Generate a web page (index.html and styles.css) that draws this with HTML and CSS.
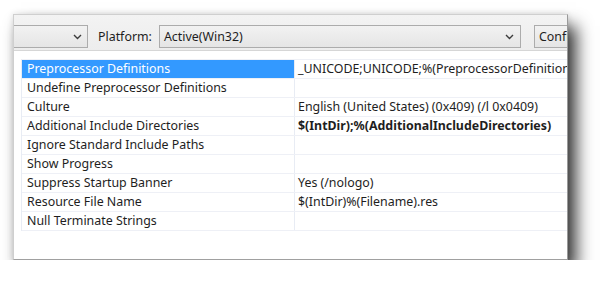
FILE: index.html
```html
<!DOCTYPE html>
<html lang="en">
<head>
    <meta charset="UTF-8">
    <title>C/C++ Preprocessor Properties</title>
    <link rel="stylesheet" href="styles.css">
</head>
<body>
    <div class="window">
        <div class="toolbar">
            <div class="combo combo-config">
                <span class="combo-text"></span>
                <svg class="chevron" width="9" height="6" viewBox="0 0 9 6"><path d="M1 1 L4.5 4.5 L8 1" fill="none" stroke="#3c3c3c" stroke-width="1.4"/></svg>
            </div>
            <label class="tb-label">Platform:</label>
            <div class="combo combo-platform">
                <span class="combo-text">Active(Win32)</span>
                <svg class="chevron" width="9" height="6" viewBox="0 0 9 6"><path d="M1 1 L4.5 4.5 L8 1" fill="none" stroke="#3c3c3c" stroke-width="1.4"/></svg>
            </div>
            <button class="tb-button">Configuration Manager...</button>
        </div>

        <div class="grid">
            <div class="gutter"></div>
            <div class="rows">
                <div class="row selected">
                    <div class="name">Preprocessor Definitions</div>
                    <div class="value">_UNICODE;UNICODE;%(PreprocessorDefinitions)</div>
                </div>
                <div class="row">
                    <div class="name">Undefine Preprocessor Definitions</div>
                    <div class="value"></div>
                </div>
                <div class="row">
                    <div class="name">Culture</div>
                    <div class="value">English (United States) (0x409) (/l 0x0409)</div>
                </div>
                <div class="row">
                    <div class="name">Additional Include Directories</div>
                    <div class="value bold">$(IntDir);%(AdditionalIncludeDirectories)</div>
                </div>
                <div class="row">
                    <div class="name">Ignore Standard Include Paths</div>
                    <div class="value"></div>
                </div>
                <div class="row">
                    <div class="name">Show Progress</div>
                    <div class="value"></div>
                </div>
                <div class="row">
                    <div class="name">Suppress Startup Banner</div>
                    <div class="value">Yes (/nologo)</div>
                </div>
                <div class="row">
                    <div class="name">Resource File Name</div>
                    <div class="value">$(IntDir)%(Filename).res</div>
                </div>
                <div class="row">
                    <div class="name">Null Terminate Strings</div>
                    <div class="value"></div>
                </div>
            </div>
        </div>
    </div>
</body>
</html>
```

FILE: styles.css
```css
body { margin: 0; background: #fff; font-family: "Noto Sans", "Open Sans", sans-serif; font-size: 12.4px; color: #1e1e1e; }

.window { margin: 14px 0 0 13px; width: 553px; height: 244px; border: 1px solid #cfcfcf; border-right-color: #9a9a9a; border-bottom-color: #a0a0a0; background: #fff; overflow: hidden; box-shadow: 8px 12px 16px rgba(0, 0, 0, 0.8), 0 0 6px rgba(0, 0, 0, 0.12); }

.toolbar { display: flex; align-items: flex-start; padding: 10px 0 2px; background: linear-gradient(#f3f3f3, #ededed); border-bottom: 1px solid #d6d6d6; }
.combo { flex: none; display: flex; align-items: center; justify-content: space-between; box-sizing: border-box; height: 23px; border: 1px solid #acacac; background: linear-gradient(#f2f2f2, #e5e5e5); }
.combo-config { width: 74px; border-left: none; padding-right: 5px; }
.combo-platform { width: 362px; margin-left: 7px; padding: 0 6px 0 4px; }
.chevron { flex: none; }
.tb-label { flex: none; margin-left: 10px; line-height: 23px; }
.tb-button { flex: none; margin-left: 13px; height: 23px; padding: 0 4px; border: 1px solid #acacac; background: linear-gradient(#f2f2f2, #e5e5e5); font: inherit; color: #1e1e1e; white-space: nowrap; text-align: left; }

.grid { display: flex; margin-top: 8px; }
.gutter { flex: none; width: 7px; border-right: 1px solid #e8ecf4; }
.rows { flex: 1; min-width: 0; border-top: 1px solid #eef0f6; }
.row { display: flex; height: 18px; border-bottom: 1px solid #eef0f6; line-height: 18px; }
.name { flex: none; width: 267px; padding-left: 5px; border-right: 1px solid #e8ecf4; white-space: nowrap; overflow: hidden; }
.value { flex: 1; min-width: 0; padding-left: 3px; white-space: nowrap; overflow: hidden; }
.bold { font-weight: bold; }
.selected .name { background: #3399ff; color: #fff; }
```
